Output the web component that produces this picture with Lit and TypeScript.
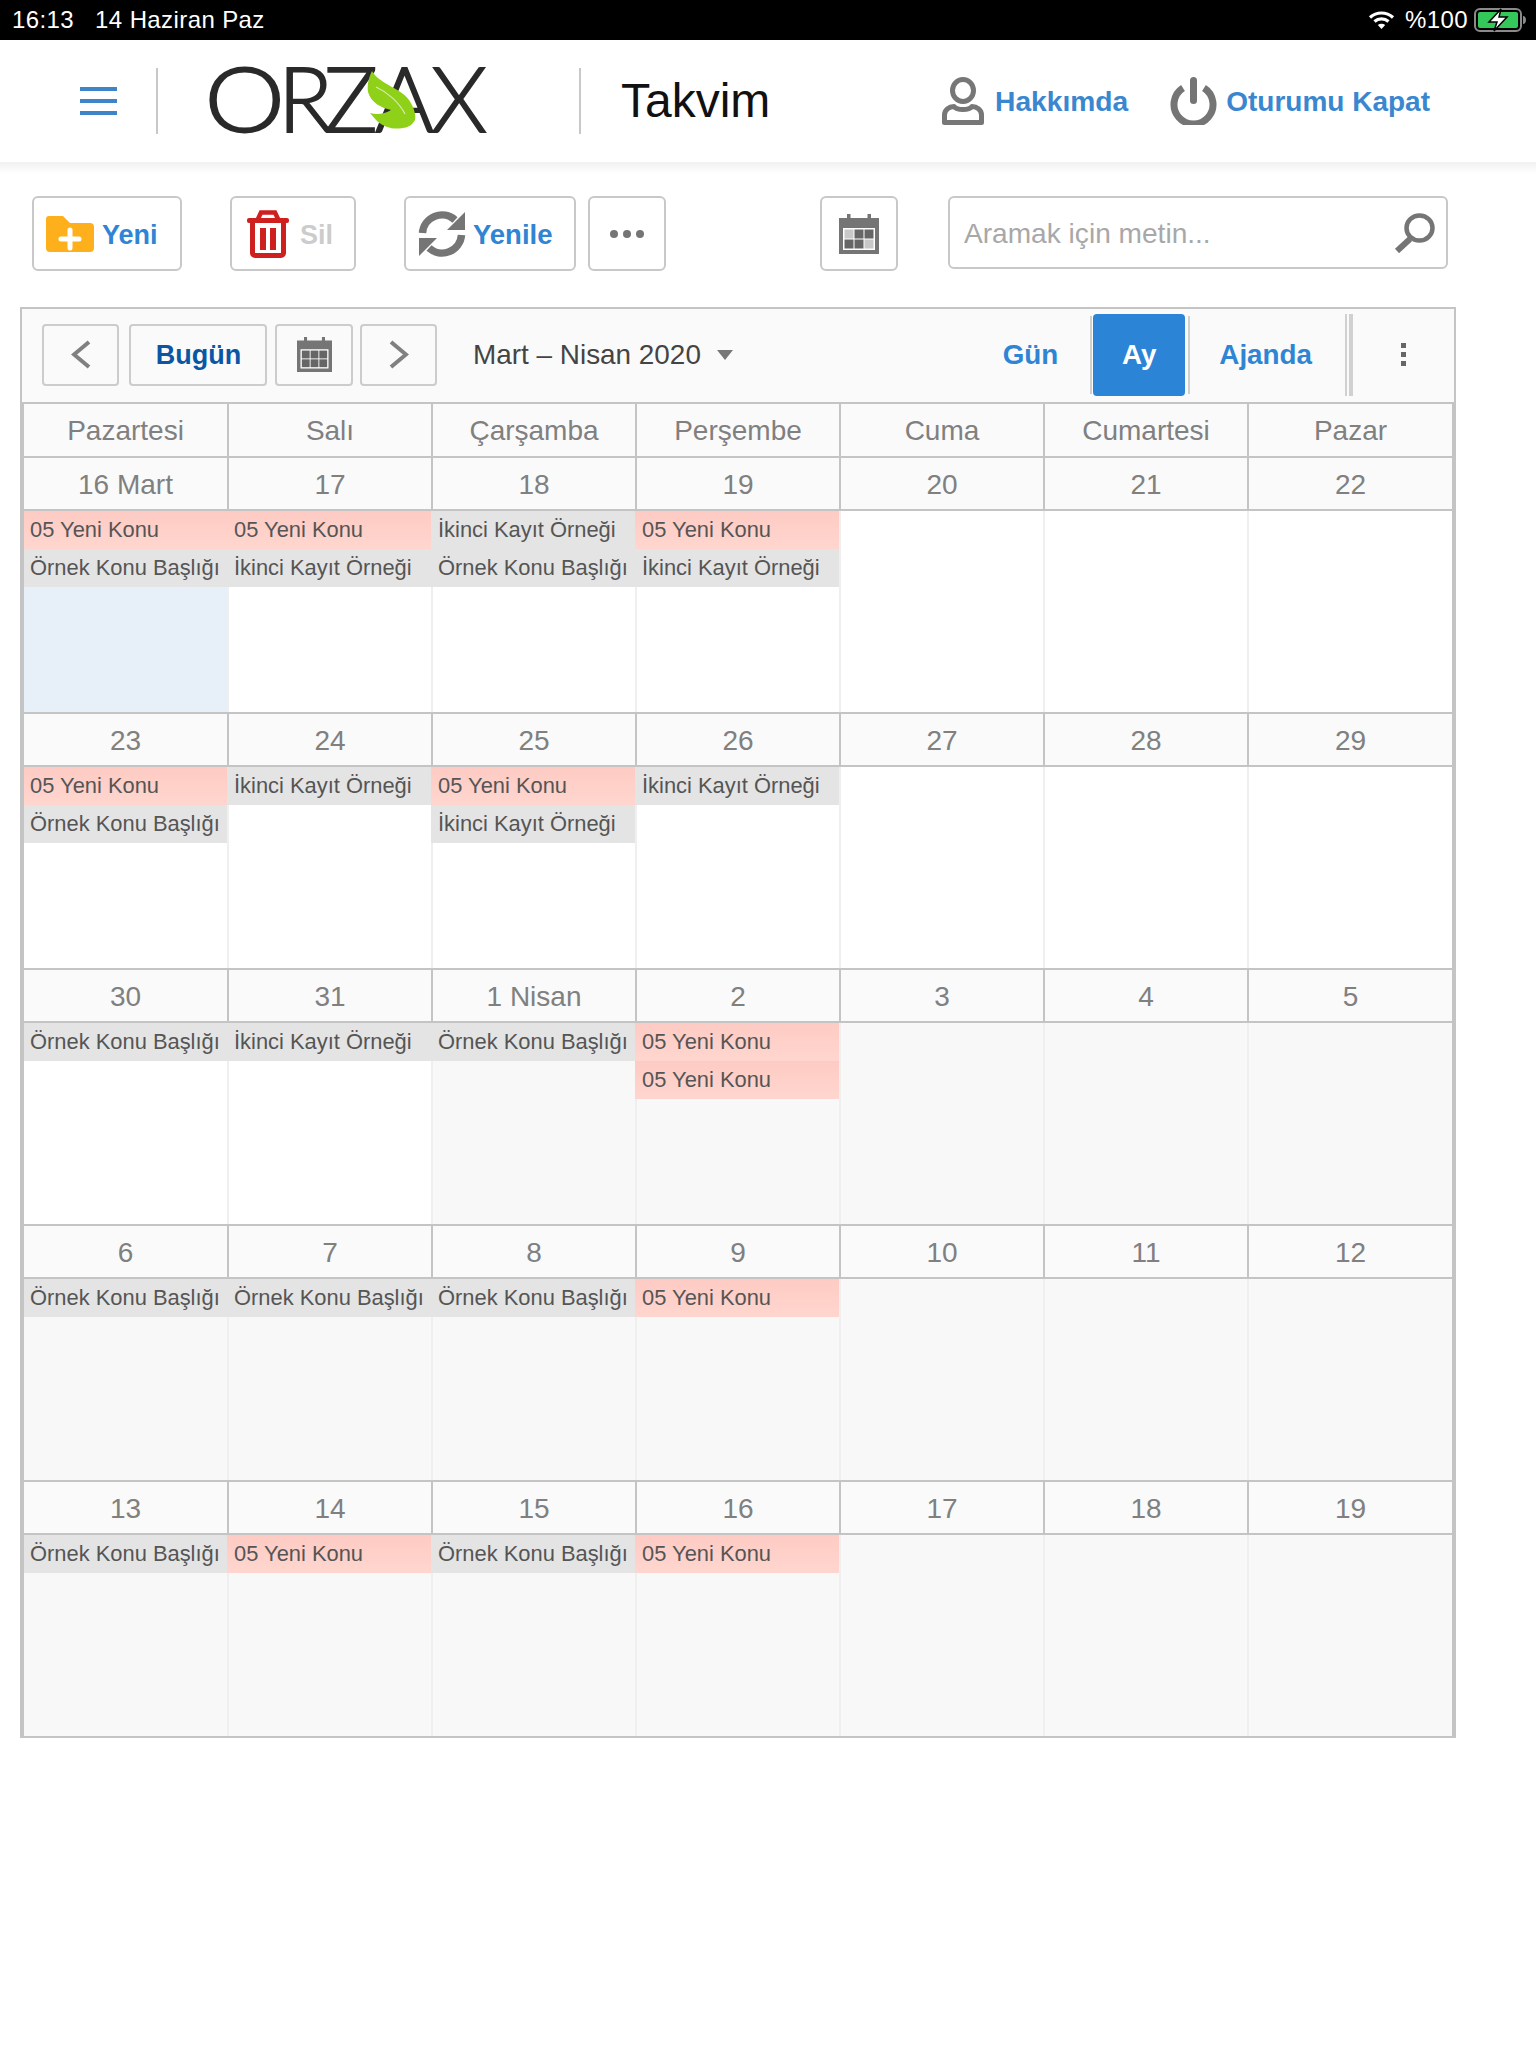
import { LitElement, html, css, svg } from "lit";
import { customElement } from "lit/decorators.js";

type Ev = "p" | "o" | "i";
const LABEL: Record<Ev, string> = { p: "05 Yeni Konu", o: "Örnek Konu Başlığı", i: "İkinci Kayıt Örneği" };
interface Day { d: string; ev: Ev[]; bg: "today" | "white" | "off" }

const mk = (labels: string[], evs: Ev[][], bgs: Day["bg"][]): Day[] =>
  labels.map((d, i) => ({ d, ev: evs[i] ?? [], bg: bgs[i] }));

const W: Day["bg"] = "white", O: Day["bg"] = "off";
const weeks: Day[][] = [
  mk(["16 Mart", "17", "18", "19", "20", "21", "22"], [["p", "o"], ["p", "i"], ["i", "o"], ["p", "i"]], ["today", W, W, W, W, W, W]),
  mk(["23", "24", "25", "26", "27", "28", "29"], [["p", "o"], ["i"], ["p", "i"], ["i"]], [W, W, W, W, W, W, W]),
  mk(["30", "31", "1 Nisan", "2", "3", "4", "5"], [["o"], ["i"], ["o"], ["p", "p"]], [W, W, O, O, O, O, O]),
  mk(["6", "7", "8", "9", "10", "11", "12"], [["o"], ["o"], ["o"], ["p"]], [O, O, O, O, O, O, O]),
  mk(["13", "14", "15", "16", "17", "18", "19"], [["o"], ["p"], ["o"], ["p"]], [O, O, O, O, O, O, O]),
];
const dayNames = ["Pazartesi", "Salı", "Çarşamba", "Perşembe", "Cuma", "Cumartesi", "Pazar"];

const calIcon = (size: number, light: boolean) => html`
  <svg width=${size} height=${size} viewBox="0 0 40 40">
    <rect x="0" y="4" width="40" height="36" fill="#757575" />
    <rect x="8" y="0" width="3.5" height="7" fill="#757575" />
    <rect x="28.5" y="0" width="3.5" height="7" fill="#757575" />
    <rect x="4" y="14" width="32" height="22" fill="#fff" />
    ${[0, 1].map((r) =>
      [0, 1, 2].map((c) =>
        svg`<rect x=${5.5 + c * 10} y=${15.5 + r * 10} width="9" height="9"
          fill=${light && ((r === 0 && c === 0) || (r === 1 && c === 2)) ? "#c8c8c8" : "#666"} />`
      )
    )}
  </svg>`;

@customElement("app-root")
export class AppRoot extends LitElement {
  static styles = css`
    :host { display: block; width: 1536px; min-height: 2048px; background: #fff; font-family: "Liberation Sans", Arial, sans-serif; }
    svg { display: block; flex: none; }
    .status { height: 40px; background: #000; color: #fff; display: flex; align-items: center; font-size: 24px; padding-left: 12px; letter-spacing: 0.4px; }
    .status .sdate { margin-left: 21px; }
    .status .right { margin-left: auto; display: flex; align-items: center; padding-right: 9px; }
    .status .wifi { margin-right: 1px; }
    .status .pct { margin: 0 6px 0 9px; }
    .head { height: 122px; display: flex; align-items: center; background: #fff; }
    .burger { margin-left: 80px; width: 37px; display: flex; flex-direction: column; gap: 8px; }
    .burger i { display: block; height: 4px; background: #3d85c6; }
    .vsep { width: 2px; height: 66px; background: #c8c8c8; }
    .head .s1 { margin-left: 39px; }
    .logo { margin-left: 20px; filter: blur(0.5px); }
    .head .s2 { margin-left: 75px; }
    .title { margin: 0 0 2px 40px; font-size: 48px; color: #111; }
    .link { display: flex; align-items: center; color: #3a87cf; font-weight: 700; font-size: 28px; }
    .link svg { margin-right: 11px; }
    .l1 { margin-left: auto; font-size: 28.2px; }
    .l2 { margin-left: 42px; margin-right: 106px; }
    .l2 svg { margin-right: 9px; }
    .l2 span { padding-top: 1px; }
    .shade { height: 12px; background: linear-gradient(#f1f1f1, #fff); }
    .tools { display: flex; margin: 22px 0 0 32px; height: 75px; align-items: flex-start; }
    .btn { box-sizing: border-box; height: 75px; border: 2px solid #c8c8c8; border-radius: 6px; display: flex; align-items: center; font-size: 27px; font-weight: 700; color: #2f85d3; background: #fff; }
    .btn span { padding-top: 3px; }
    .yeni { width: 150px; padding-left: 12px; gap: 8px; }
    .sil { width: 126px; margin-left: 48px; padding-left: 15px; gap: 11px; color: #ccc; }
    .yenile { width: 172px; margin-left: 48px; padding-left: 12px; gap: 7px; font-size: 27.5px; }
    .more { width: 78px; margin-left: 12px; justify-content: center; }
    .tcal { width: 78px; margin-left: 154px; justify-content: center; }
    .search { box-sizing: border-box; width: 500px; height: 73px; margin-left: 50px; border: 2px solid #c8c8c8; border-radius: 6px; display: flex; align-items: center; justify-content: space-between; padding: 0 11px 0 14px; font-size: 28.1px; color: #a8a8a8; }
    .search span { padding-top: 3px; }
    .panel { box-sizing: border-box; width: 1436px; margin: 36px 0 0 20px; border: 2px solid #c4c4c4; border-bottom: 0; background: #fafafa; }
    .bar { height: 93px; display: flex; align-items: center; padding: 0 0 2px 20px; box-sizing: border-box; }
    .nb { box-sizing: border-box; height: 62px; border: 2px solid #ccc; border-radius: 4px; display: flex; align-items: center; justify-content: center; font-size: 27px; font-weight: 700; color: #0a56a5; }
    .n1 { width: 77px; }
    .n2 { width: 138px; margin-left: 10px; padding: 2px 0 0 1px; }
    .n3 { width: 78px; margin-left: 8px; }
    .n4 { width: 77px; margin-left: 7px; }
    .range { margin-left: 36px; padding-top: 1px; font-size: 27.9px; color: #444; }
    .caret { margin-left: 16px; width: 0; height: 0; border-left: 8px solid transparent; border-right: 8px solid transparent; border-top: 10px solid #777; }
    .views { margin-left: auto; display: flex; align-items: center; font-size: 27.8px; font-weight: 700; color: #2f85d3; }
    .gun { margin-right: 32px; }
    .s { width: 2px; height: 78px; background: #d0d0d0; }
    .ay { width: 92px; height: 82px; margin: 0 3px 0 1px; background: #2b84d6; color: #fff; border-radius: 4px; display: flex; align-items: center; justify-content: center; }
    .ajanda { margin: 0 33px 0 29px; }
    .dbl { width: 2px; height: 82px; background: #d0d0d0; margin-right: 2px; }
    .dbl.b { width: 4px; margin-right: 0; }
    .kebab { width: 5px; margin: 0 48px; display: flex; flex-direction: column; gap: 4px; }
    .kebab i { display: block; width: 5px; height: 5px; background: #666; }
    .grid { box-sizing: border-box; border: 2px solid #c4c4c4; border-bottom: 0; width: 1432px; background: #fff; }
    .row { display: grid; grid-template-columns: 203px repeat(5, 204px) 205px; }
    .names { height: 52px; background: #fafafa; }
    .names div { box-sizing: border-box; padding-top: 2px; border-left: 2px solid #c4c4c4; display: flex; align-items: center; justify-content: center; font-size: 28px; color: #808080; }
    .names div:first-child, .day:first-child .cdate, .day:first-child .body { border-left: 0; }
    .week { border-top: 2px solid #c4c4c4; height: 254px; }
    .day { display: flex; flex-direction: column; min-width: 0; }
    .cdate { box-sizing: border-box; height: 53px; padding-top: 2px; background: #fafafa; border-left: 2px solid #c4c4c4; border-bottom: 2px solid #c4c4c4; display: flex; align-items: center; justify-content: center; font-size: 28px; color: #808080; }
    .body { box-sizing: border-box; flex: 1; border-left: 2px solid #efefef; }
    .body.white { background: #fff; }
    .body.off { background: #f8f8f8; }
    .body.today { background: #e7f0f9; }
    .ev { box-sizing: border-box; height: 38px; margin-left: -2px; padding-left: 7px; display: flex; align-items: center; font-size: 21.9px; color: #555; white-space: nowrap; overflow: hidden; }
    .day:first-child .ev { margin-left: 0; padding-left: 6px; }
    .ev.p { background: linear-gradient(#fdcbc3, #ffd6cf); }
    .ev.o, .ev.i { background: #e4e4e4; }
    .bottomline { height: 2px; width: 1436px; margin-left: 20px; background: #c4c4c4; }
  `;

  render() {
    return html`
      <div class="status">
        <span>16:13</span><span class="sdate">14 Haziran Paz</span>
        <div class="right">
          <svg class="wifi" width="27" height="20" viewBox="0 0 27 20" fill="none" stroke="#fff" stroke-width="3.2">
            <path d="M2 7.5C8.5 1.5 18.5 1.5 25 7.5" />
            <path d="M6.5 11.5C10.5 8 16.5 8 20.5 11.5" />
            <path d="M13.5 19L9.8 15C12 13.2 15 13.2 17.2 15Z" fill="#fff" stroke="none" />
          </svg>
          <span class="pct">%100</span>
          <svg width="53" height="24" viewBox="0 0 53 24">
            <rect x="1" y="1" width="46" height="22" rx="5" fill="none" stroke="#8a8a8a" stroke-width="2" />
            <rect x="4" y="4" width="40" height="16" rx="2" fill="#34c759" />
            <path d="M49 8c2 0 3 2 3 4s-1 4-3 4z" fill="#8a8a8a" />
            <path d="M27 1L15 14h8l-3 9 13-14h-8z" fill="#fff" stroke="#000" stroke-width="1.5" />
          </svg>
        </div>
      </div>
      <div class="head">
        <div class="burger"><i></i><i></i><i></i></div>
        <div class="vsep s1"></div>
        <svg class="logo" width="326" height="122" viewBox="179 40 326 122" role="img" aria-label="ORZAX">
          <g font-family="Lato, 'Liberation Sans', sans-serif" font-size="90" font-weight="300" fill="#2a2a2a" stroke="#2a2a2a" stroke-width="1.8">
            <text transform="translate(205.5 132) scale(1.13 1)">O</text>
            <text x="279 325 376 432" y="132">RZAX</text>
          </g>
          <path d="M373 71C380 84 402 88 410 100C416 109 417 116 416 120C413 126 408 128 400 128.5C392 129 385 127 378 121C375 118 373 115 371 113C378 115 386 114 392 110C383 108 372 103 369 92C368 84 370 77 373 71Z" fill="#8fd118" />
          <path d="M377 87C388 92 400 102 406 114" fill="none" stroke="#d4ecaa" stroke-width="1.2" />
        </svg>
        <div class="vsep s2"></div>
        <div class="title">Takvim</div>
        <div class="link l1">
          <svg width="42" height="48" viewBox="0 0 42 48" fill="none" stroke="#777" stroke-width="5">
            <ellipse cx="21" cy="13.5" rx="10.5" ry="11" />
            <path d="M2.5 45.5V38C2.5 33 7 29.5 12 29.5C15 33.5 27 33.5 30 29.5C35 29.5 39.5 33 39.5 38V45.5Z" stroke-linejoin="round" />
          </svg>
          <span>Hakkımda</span>
        </div>
        <div class="link l2">
          <svg width="47" height="48" viewBox="0 0 47 48" fill="none" stroke="#757575" stroke-width="7">
            <path d="M13 11A19.5 19.5 0 1 0 34 11" />
            <rect x="20" y="0" width="7" height="27" rx="3.5" fill="#757575" stroke="none" />
          </svg>
          <span>Oturumu Kapat</span>
        </div>
      </div>
      <div class="shade"></div>
      <div class="tools">
        <div class="btn yeni">
          <svg width="48" height="36" viewBox="0 0 48 36">
            <path d="M0 3a3 3 0 0 1 3-3h14l7 7h20a4 4 0 0 1 4 4v21a4 4 0 0 1-4 4H4a4 4 0 0 1-4-4z" fill="#fdb01c" />
            <path d="M15 23h18M24 14v18" stroke="#fff" stroke-width="5" stroke-linecap="round" />
          </svg>
          <span>Yeni</span>
        </div>
        <div class="btn sil">
          <svg width="42" height="48" viewBox="0 0 42 48" fill="none">
            <rect x="0" y="8" width="42" height="5" rx="2" fill="#cf2020" />
            <path d="M11 9L14 2.5H28L31 9" stroke="#cf2020" stroke-width="4.5" />
            <path d="M5.5 12V43a2.5 2.5 0 0 0 2.5 2.5H34a2.5 2.5 0 0 0 2.5-2.5V12" stroke="#cf2020" stroke-width="5" />
            <rect x="13" y="18" width="6" height="22" fill="#cf2020" />
            <rect x="23" y="18" width="6" height="22" fill="#cf2020" />
          </svg>
          <span>Sil</span>
        </div>
        <div class="btn yenile">
          <svg width="48" height="48" viewBox="0 0 48 48">
            <g fill="none" stroke="#757575" stroke-width="7.5">
              <path d="M4.5 23A19.5 19.5 0 0 1 37 10" />
              <path d="M43.5 25A19.5 19.5 0 0 1 11 38" />
            </g>
            <path d="M47 2V20H29Z" fill="#757575" />
            <path d="M1 46V28H19Z" fill="#757575" />
          </svg>
          <span>Yenile</span>
        </div>
        <div class="btn more">
          <svg width="34" height="8" viewBox="0 0 34 8" fill="#757575">
            <circle cx="4" cy="4" r="4" /><circle cx="17" cy="4" r="4" /><circle cx="30" cy="4" r="4" />
          </svg>
        </div>
        <div class="btn tcal">${calIcon(40, true)}</div>
        <div class="search">
          <span>Aramak için metin...</span>
          <svg width="41" height="40" viewBox="0 0 41 40" fill="none" stroke="#757575">
            <ellipse cx="25.5" cy="15" rx="13" ry="12.5" stroke-width="4.5" />
            <path d="M16 26L3 38" stroke-width="6" />
          </svg>
        </div>
      </div>
      <div class="panel">
        <div class="bar">
          <div class="nb n1">
            <svg width="20" height="29" viewBox="0 0 20 29" fill="none" stroke="#808080" stroke-width="4"><path d="M18 2L3 14.5L18 27" /></svg>
          </div>
          <div class="nb n2">Bugün</div>
          <div class="nb n3">${calIcon(35, false)}</div>
          <div class="nb n4">
            <svg width="20" height="29" viewBox="0 0 20 29" fill="none" stroke="#808080" stroke-width="4"><path d="M2 2L17 14.5L2 27" /></svg>
          </div>
          <div class="range">Mart – Nisan 2020</div>
          <div class="caret"></div>
          <div class="views">
            <span class="gun">Gün</span>
            <div class="s"></div>
            <div class="ay">Ay</div>
            <div class="s"></div>
            <span class="ajanda">Ajanda</span>
            <div class="dbl"></div><div class="dbl b"></div>
            <div class="kebab"><i></i><i></i><i></i></div>
          </div>
        </div>
        <div class="grid">
          <div class="row names">${dayNames.map((n) => html`<div>${n}</div>`)}</div>
          ${weeks.map(
            (w) => html`<div class="row week">
              ${w.map(
                (c) => html`<div class="day">
                  <div class="cdate">${c.d}</div>
                  <div class="body ${c.bg}">
                    ${c.ev.map((e) => html`<div class="ev ${e}">${LABEL[e]}</div>`)}
                  </div>
                </div>`
              )}
            </div>`
          )}
        </div>
      </div>
      <div class="bottomline"></div>
    `;
  }
}
